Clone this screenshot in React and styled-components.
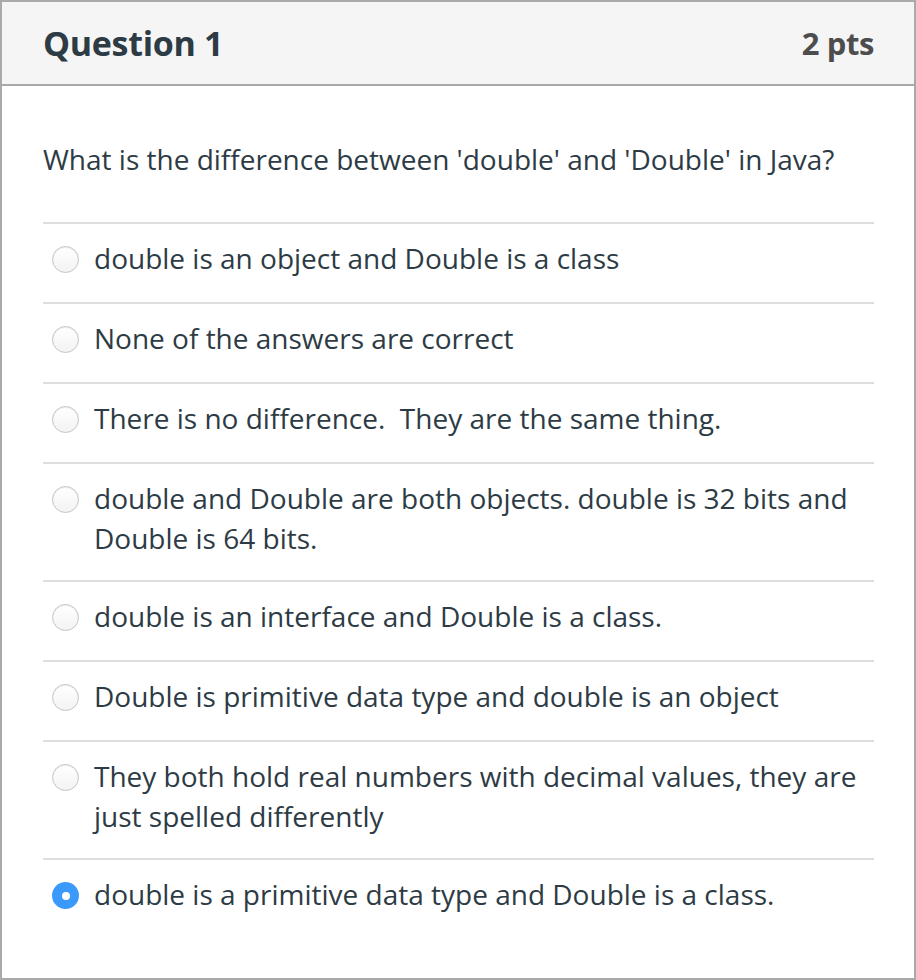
import React from "react";
import styled, { createGlobalStyle } from "styled-components";

const GlobalStyle = createGlobalStyle`
  html, body {
    margin: 0;
    padding: 0;
    background: #fff;
  }
  body {
    font-family: "Open Sans", "Liberation Sans", sans-serif;
    -webkit-font-smoothing: antialiased;
  }
`;

const answers = [
  { text: "double is an object and Double is a class" },
  { text: "None of the answers are correct" },
  { text: "There is no difference.\u00a0 They are the same thing." },
  {
    text: "double and Double are both objects. double is 32 bits and Double is 64 bits.",
  },
  { text: "double is an interface and Double is a class." },
  { text: "Double is primitive data type and double is an object" },
  {
    text: "They both hold real numbers with decimal values, they are just spelled differently",
  },
  { text: "double is a primitive data type and Double is a class.", checked: true },
];

export default function App() {
  return (
    <>
      <GlobalStyle />
      <Card>
        <Header>
          <Title>Question 1</Title>
          <Points>2 pts</Points>
        </Header>
        <Body>
          <Prompt>What is the difference between 'double' and 'Double' in Java?</Prompt>
          <AnswerList>
            {answers.map((a, i) => (
              <Answer key={i}>
                <Radio $checked={a.checked} />
                <AnswerText>{a.text}</AnswerText>
              </Answer>
            ))}
          </AnswerList>
        </Body>
      </Card>
    </>
  );
}

const Card = styled.div`
  width: 916px;
  height: 980px;
  box-sizing: border-box;
  border: 2px solid #a9a9a9;
  background: #fff;
  display: flex;
  flex-direction: column;
`;

const Header = styled.div`
  height: 82px;
  background: #f5f5f5;
  border-bottom: 2px solid #a9a9a9;
  display: flex;
  align-items: center;
  justify-content: space-between;
  padding: 0 40px 0 41px;
`;

const Title = styled.h2`
  margin: 0;
  font-size: 34px;
  font-weight: 700;
  color: #2d3b45;
  letter-spacing: -0.3px;
`;

const Points = styled.div`
  font-size: 31px;
  font-weight: 700;
  color: #4d4d4d;
  letter-spacing: -0.4px;
`;

const Body = styled.div`
  padding: 54px 40px 0 41px;
`;

const Prompt = styled.p`
  margin: 0 0 43px;
  font-size: 28px;
  line-height: 39px;
  color: #2d3b45;
`;

const AnswerList = styled.div`
  display: flex;
  flex-direction: column;
`;

const Answer = styled.div`
  display: flex;
  align-items: flex-start;
  gap: 15px;
  padding: 14px 0 22px 9px;
  border-top: 2px solid #dedede;
`;

const Radio = styled.span`
  flex: none;
  width: 27px;
  height: 27px;
  margin: 8px 0 7px;
  box-sizing: border-box;
  border-radius: 50%;
  position: relative;
  ${({ $checked }) =>
    $checked
      ? `
    background: #3b99fc;
    &::after {
      content: "";
      position: absolute;
      left: 50%;
      top: 50%;
      width: 8px;
      height: 8px;
      margin: -4px 0 0 -4px;
      border-radius: 50%;
      background: #fff;
    }
  `
      : `
    border: 1.5px solid #c4c4c4;
    background: linear-gradient(#ffffff, #f3f3f3);
    box-shadow: inset 0 1px 1px rgba(0,0,0,0.08);
  `}
`;

const AnswerText = styled.span`
  font-size: 28px;
  line-height: 40px;
  color: #2d3b45;
`;
